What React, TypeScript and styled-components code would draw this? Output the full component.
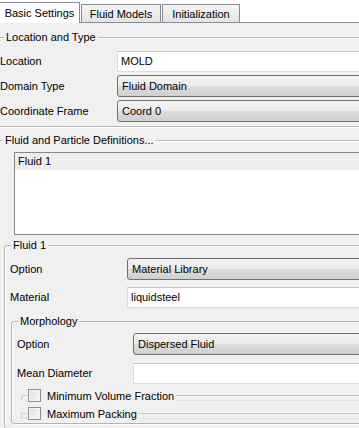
import styled, { createGlobalStyle } from "styled-components";

const GlobalStyle = createGlobalStyle`
  html, body {
    margin: 0;
    padding: 0;
    overflow: hidden;
    background: #ffffff;
  }
  body {
    font-family: "Liberation Sans", Arial, sans-serif;
    font-size: 11px;
    color: #000000;
  }
  * {
    box-sizing: border-box;
  }
`;

export default function App() {
  return (
    <>
      <GlobalStyle />
      <Window>
        <TabBar>
          <Tab $active>Basic Settings</Tab>
          <Tab $width={80}>Fluid Models</Tab>
          <Tab $width={78}>Initialization</Tab>
        </TabBar>

        <Pane>
          <Group $left={-4} $top={14}>
            <GroupTitle $left={4}>Location and Type</GroupTitle>
            <Rows $top={6} $gap={3}>
              <Row $label={117}>
                <Label>Location</Label>
                <TextInput>MOLD</TextInput>
              </Row>
              <Row $label={117}>
                <Label>Domain Type</Label>
                <Combo>Fluid Domain</Combo>
              </Row>
              <Row $label={117}>
                <Label>Coordinate Frame</Label>
                <Combo>Coord 0</Combo>
              </Row>
            </Rows>
          </Group>

          <Group $left={-4} $top={13}>
            <GroupTitle $left={3}>Fluid and Particle Definitions...</GroupTitle>
            <ListBox>
              <ListItem $selected>Fluid 1</ListItem>
            </ListBox>

            <Group $left={4} $top={10} $pad={5}>
              <GroupTitle $left={1}>Fluid 1</GroupTitle>
              <Rows $top={6} $gap={6}>
                <Row $label={117}>
                  <Label>Option</Label>
                  <Combo>Material Library</Combo>
                </Row>
                <Row $label={117}>
                  <Label>Material</Label>
                  <TextInput>liquidsteel</TextInput>
                </Row>
              </Rows>

              <Group $left={1} $top={13} $pad={5}>
                <GroupTitle $left={1}>Morphology</GroupTitle>
                <Rows $top={5} $gap={7}>
                  <Row $label={116}>
                    <Label>Option</Label>
                    <Combo>Dispersed Fluid</Combo>
                  </Row>
                  <Row $label={116}>
                    <Label>Mean Diameter</Label>
                    <TextInput />
                  </Row>
                </Rows>
                <CheckGroup>
                  <CheckTitle>
                    <CheckBox />
                    <span>Minimum Volume Fraction</span>
                  </CheckTitle>
                </CheckGroup>
                <CheckGroup>
                  <CheckTitle>
                    <CheckBox />
                    <span>Maximum Packing</span>
                  </CheckTitle>
                </CheckGroup>
              </Group>
            </Group>
          </Group>
        </Pane>
      </Window>
    </>
  );
}

const Window = styled.div`
  width: 359px;
  height: 428px;
  overflow: hidden;
`;

const TabBar = styled.div`
  display: flex;
  align-items: flex-end;
  height: 22px;
  position: relative;
  z-index: 1;
`;

const Tab = styled.div<{ $active?: boolean; $width?: number }>`
  display: flex;
  align-items: center;
  justify-content: center;
  border: 1px solid #898c95;
  border-bottom: none;
  white-space: nowrap;
  ${(p) =>
    p.$active
      ? `
    width: 81px;
    height: 21px;
    margin-left: -1px;
    margin-bottom: -1px;
    background: #ffffff;
    padding-bottom: 1px;
  `
      : `
    width: ${p.$width}px;
    height: 18px;
    margin-left: 1px;
    background: linear-gradient(#f6f6f6, #e4e4e4);
    padding-top: 1px;
  `}
`;

const Pane = styled.div`
  border-top: 1px solid #898c95;
  background: #f0f0f0;
  height: 406px;
  overflow: hidden;
`;

const Group = styled.div<{ $left: number; $top: number; $pad?: number }>`
  margin: ${(p) => p.$top}px -20px 0 ${(p) => p.$left}px;
  padding: 0 0 4px ${(p) => p.$pad ?? 3}px;
  border: 1px solid #b4b4b4;
  border-radius: 3px;
  box-shadow: inset 1px 1px 0 #ffffff, 1px 1px 0 #ffffff;
`;

const GroupTitle = styled.div<{ $left: number }>`
  width: fit-content;
  margin: -7px 0 0 ${(p) => p.$left}px;
  padding: 0 2px;
  line-height: 13px;
  background: #f0f0f0;
`;

const Rows = styled.div<{ $top: number; $gap: number }>`
  display: flex;
  flex-direction: column;
  gap: ${(p) => p.$gap}px;
  margin-top: ${(p) => p.$top}px;
`;

const Row = styled.div<{ $label: number }>`
  display: grid;
  grid-template-columns: ${(p) => p.$label}px 1fr;
  align-items: center;
  height: 22px;
`;

const Label = styled.div`
  white-space: nowrap;
`;

const TextInput = styled.div`
  height: 21px;
  display: flex;
  align-items: center;
  padding-left: 3px;
  background: #ffffff;
  border: 1px solid #dcdcdc;
  border-top-color: #c4c4c4;
`;

const Combo = styled.div`
  height: 22px;
  display: flex;
  align-items: center;
  padding-left: 4px;
  border: 1px solid #707070;
  border-radius: 3px;
  background: linear-gradient(#f2f2f2 0%, #ebebeb 50%, #dddddd 50%, #cfcfcf 100%);
`;

const ListBox = styled.div`
  margin: 5px 0 0 14px;
  height: 83px;
  background: #ffffff;
  border: 1px solid #828790;
`;

const ListItem = styled.div<{ $selected?: boolean }>`
  height: 17px;
  line-height: 17px;
  padding-left: 3px;
  background: ${(p) => (p.$selected ? "#eeeeee" : "transparent")};
`;

const CheckGroup = styled.div`
  margin: 11px 0 0 4px;
  height: 6px;
  border: 1px solid #c8c8c8;
  border-bottom-color: #e2e2e2;
  border-radius: 2px;
  & + & {
    margin-top: 12px;
  }
`;

const CheckTitle = styled.div`
  display: flex;
  align-items: center;
  gap: 6px;
  width: fit-content;
  margin: -7px 0 0 5px;
  padding: 0 2px 0 1px;
  height: 13px;
  background: #f0f0f0;
`;

const CheckBox = styled.span`
  display: inline-block;
  width: 13px;
  height: 13px;
  border: 1px solid #8f8f8f;
  background: linear-gradient(135deg, #dcdcdc, #fbfbfb);
  box-shadow: inset 0 0 0 1px #f4f4f4;
`;
